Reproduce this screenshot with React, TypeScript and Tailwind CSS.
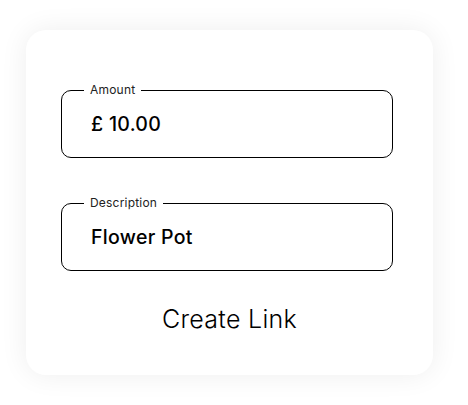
import { useState } from "react";

function Field({ label, value }: { label: string; value: string }) {
  return (
    <fieldset className="rounded-[10px] border border-black p-0">
      <legend className="ml-[22px] px-[6px] text-[12px] leading-[14px] tracking-[0.2px] text-[#222]">
        {label}
      </legend>
      <div className="pl-[29px] pt-[15px] pb-[21px] text-[19.5px] leading-6 font-medium tracking-[0.3px] text-black">
        {value}
      </div>
    </fieldset>
  );
}

export default function App() {
  const [amount] = useState("£ 10.00");
  const [description] = useState("Flower Pot");

  return (
    <div className="min-h-[405px] w-[468px] bg-white pt-[30px] pl-[26px] font-['Inter',sans-serif]">
      <div className="flex w-[407px] flex-col rounded-[20px] bg-white pt-[53px] pb-[40px] shadow-[0_0_28px_rgba(0,0,0,0.07)]">
        <div className="pl-[35px] pr-[40px]">
          <Field label="Amount" value={amount} />
          <div className="mt-[38px]">
            <Field label="Description" value={description} />
          </div>
        </div>
        <button className="mt-[32px] text-center text-[25px] leading-8 font-light tracking-[0.3px] text-black">
          Create Link
        </button>
      </div>
    </div>
  );
}
